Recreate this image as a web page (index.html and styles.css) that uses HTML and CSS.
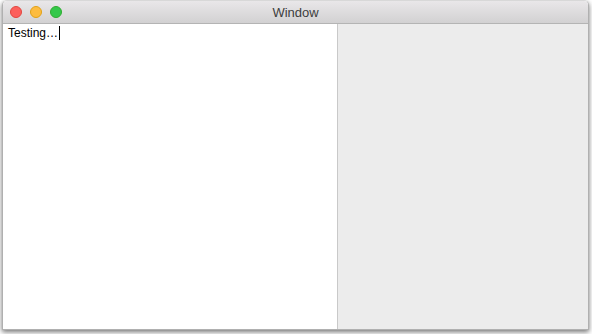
FILE: index.html
```html
<!DOCTYPE html>
<html lang="en">
<head>
    <meta charset="UTF-8">
    <title>Window</title>
    <link rel="stylesheet" href="styles.css">
</head>
<body>
    <div class="window">
        <div class="titlebar">
            <div class="lights">
                <span class="light close"></span>
                <span class="light minimize"></span>
                <span class="light zoom"></span>
            </div>
            <div class="title">Window</div>
        </div>
        <div class="content">
            <div class="editor">Testing…<span class="caret"></span></div>
            <div class="sidebar"></div>
        </div>
    </div>
</body>
</html>
```

FILE: styles.css
```css
* {
    margin: 0;
    padding: 0;
    box-sizing: border-box;
}

body {
    font-family: 'Liberation Sans', Arial, sans-serif;
    background: #ffffff;
    width: 592px;
    height: 334px;
    overflow: hidden;
}

.window {
    width: 587px;
    height: 330px;
    margin: 0 3px 0 2px;
    display: flex;
    flex-direction: column;
    border-radius: 5px 5px 0 0;
    overflow: hidden;
    border: 1px solid #b0b0b0;
    border-top-color: #d8d8d8;
    box-shadow: 0 2px 5px rgba(0,0,0,0.55);
}

.titlebar {
    position: relative;
    height: 23px;
    flex-shrink: 0;
    background: linear-gradient(#e9e7e9, #d2d1d2);
    border-bottom: 1px solid #b4b4b4;
    display: flex;
    align-items: center;
    justify-content: center;
}

.lights {
    position: absolute;
    left: 7px;
    top: 5px;
    display: flex;
    gap: 8px;
}

.light {
    width: 12px;
    height: 12px;
    border-radius: 50%;
}

.close {
    background: #fc605c;
    border: 1px solid #e2463f;
}

.minimize {
    background: #fdbc40;
    border: 1px solid #e1a116;
}

.zoom {
    background: #34c84a;
    border: 1px solid #2dac2f;
}

.title {
    font-size: 13px;
    color: #3d3d3d;
    padding-top: 1px;
}

.content {
    flex: 1;
    display: flex;
}

.editor {
    width: 335px;
    background: #ffffff;
    border-right: 1px solid #c9c9c9;
    font-size: 12px;
    color: #000000;
    padding: 2px 0 0 5px;
    line-height: 14px;
}

.caret {
    display: inline-block;
    width: 1px;
    height: 14px;
    background: #000000;
    vertical-align: top;
    margin-left: 1px;
}

.sidebar {
    flex: 1;
    background: #ececec;
}
```
